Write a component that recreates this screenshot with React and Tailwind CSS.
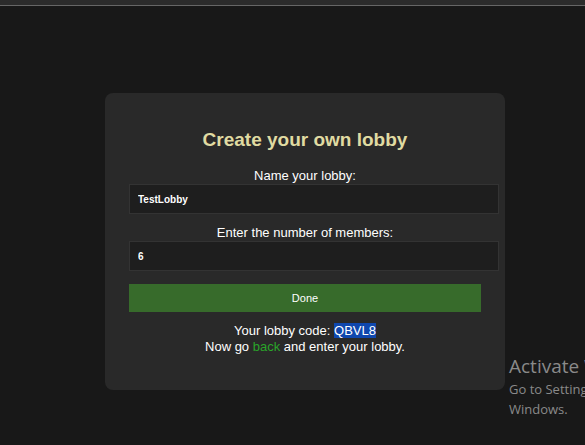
import { useState } from 'react';

function CreateLobby() {
  const [name, setName] = useState('TestLobby');
  const [members, setMembers] = useState('6');

  return (
    <div className="w-[400px] ml-[105px] mt-[87px] bg-[#292929] rounded-[8px] px-[24px] pt-[35px] pb-[35px] text-center">
      <h2 className="text-[19px] leading-[24px] font-bold text-[#e0dba2]">Create your own lobby</h2>

      <label className="block mt-[16px] text-[13px] leading-[16px] text-white">Name your lobby:</label>
      <input
        type="text"
        value={name}
        onChange={(e) => setName(e.target.value)}
        className="block w-[370px] h-[30px] px-[8px] bg-[#1e1e1e] border border-[#333333] text-white text-[10px] font-bold outline-none"
      />

      <label className="block mt-[11px] text-[13px] leading-[16px] text-white">Enter the number of members:</label>
      <input
        type="text"
        value={members}
        onChange={(e) => setMembers(e.target.value)}
        className="block w-[370px] h-[30px] px-[8px] bg-[#1e1e1e] border border-[#333333] text-white text-[10px] font-bold outline-none"
      />

      <button className="block w-full h-[28px] mt-[13px] bg-[#376b2b] text-white text-[11px] leading-[26px]">
        Done
      </button>

      <div className="mt-[11px] text-[13px] leading-[16px] text-white">
        <p>Your lobby code: <span className="bg-[#0f47ad]">QBVL8</span></p>
        <p>Now go <a className="text-[#2aa52a]">back</a> and enter your lobby.</p>
      </div>
    </div>
  );
}

export default function App() {
  return (
    <div className="relative w-[585px] h-[445px] overflow-hidden bg-[#181818] font-['Liberation_Sans',Arial,sans-serif]">
      <div className="h-[5px] bg-[#2b2b2b]"></div>
      <div className="h-[1px] bg-[#666666]"></div>
      <CreateLobby />

      {/* windows watermark */}
      <div className="absolute left-[509px] top-[354px] whitespace-nowrap text-[#8a8a8a] font-['Open_Sans',sans-serif]">
        <div className="text-[19px] leading-[25px]">Activate Windows</div>
        <div className="text-[13px] leading-[20px]">Go to Settings to activate</div>
        <div className="text-[13px] leading-[20px]">Windows.</div>
      </div>
    </div>
  );
}
